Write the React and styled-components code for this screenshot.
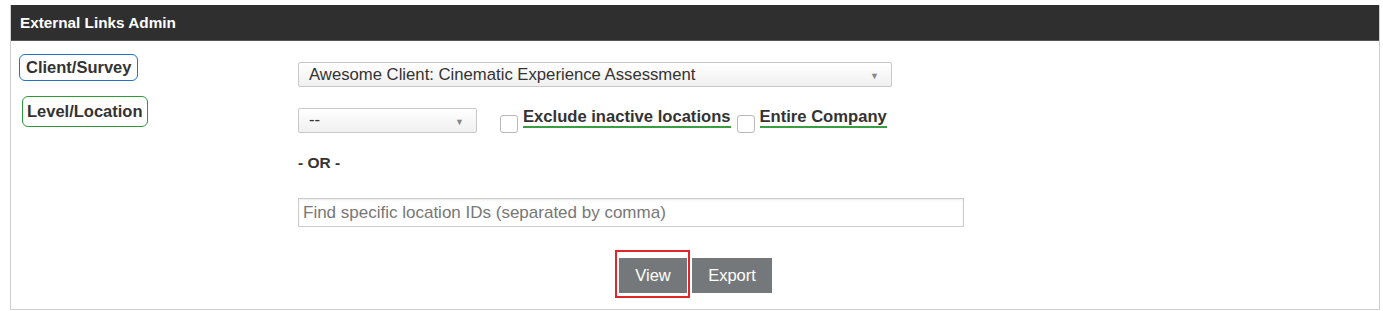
import styled, { createGlobalStyle } from 'styled-components';

const GlobalStyle = createGlobalStyle`
  body {
    margin: 0;
    background: #fff;
    font-family: "Liberation Sans", Arial, sans-serif;
    color: #333;
  }
`;

function App() {
  return (
    <>
      <GlobalStyle />
      <Panel>
        <Header>External Links Admin</Header>
        <Body>
          <Row>
            <LabelCell>
              <FieldLabel $color="#1f72c8">Client/Survey</FieldLabel>
            </LabelCell>
            <FieldCell $top={8}>
              <Select $width={594}>
                <span>Awesome Client: Cinematic Experience Assessment</span>
                <Arrow>▼</Arrow>
              </Select>
            </FieldCell>
          </Row>
          <Row>
            <LabelCell>
              <FieldLabel $color="#2c9a3c" $shift={3} $tall>
                Level/Location
              </FieldLabel>
            </LabelCell>
            <FieldCell $top={11}>
              <Select $width={179}>
                <span>--</span>
                <Arrow>▼</Arrow>
              </Select>
              <Check>
                <Box />
                <CheckText>Exclude inactive locations</CheckText>
              </Check>
              <Check>
                <Box />
                <CheckText>Entire Company</CheckText>
              </Check>
            </FieldCell>
          </Row>
          <Row>
            <LabelCell />
            <FieldCell $top={21}>
              <OrText>- OR -</OrText>
            </FieldCell>
          </Row>
          <Row>
            <LabelCell />
            <FieldCell $top={26}>
              <TextInput placeholder="Find specific location IDs (separated by comma)" />
            </FieldCell>
          </Row>
          <Actions>
            <Highlight>
              <Button $width={68}>View</Button>
            </Highlight>
            <Button $width={80}>Export</Button>
          </Actions>
        </Body>
      </Panel>
    </>
  );
}

export default App;

// STYLES
const Panel = styled.div`
  margin: 5px 0 0 10px;
  width: 1370px;
  border: 1px solid #cfcfcf;
  border-top: none;
  box-sizing: border-box;
`;

const Header = styled.div`
  height: 36px;
  background: #2f2f2f;
  border-bottom: 1px solid #555;
  box-sizing: border-box;
  color: #fff;
  font-weight: bold;
  font-size: 15.3px;
  line-height: 36px;
  padding-left: 9px;
`;

const Body = styled.div`
  display: flex;
  flex-direction: column;
  padding: 13px 0 11px 8px;
`;

const Row = styled.div`
  display: grid;
  grid-template-columns: 279px 1fr;
  align-items: start;
`;

const LabelCell = styled.div`
  display: flex;
`;

const FieldCell = styled.div`
  display: flex;
  align-items: center;
  margin-top: ${(p) => p.$top}px;
`;

const FieldLabel = styled.div`
  margin-left: ${(p) => p.$shift || 0}px;
  border: 1.5px solid ${(p) => p.$color};
  border-radius: 6px;
  padding: 0 ${(p) => (p.$tall ? 4 : 6)}px;
  height: ${(p) => (p.$tall ? 31 : 27)}px;
  line-height: ${(p) => (p.$tall ? 28 : 24)}px;
  box-sizing: border-box;
  font-weight: bold;
  font-size: 16.5px;
  color: #333;
  margin-bottom: ${(p) => (p.$tall ? 0 : 15)}px;
`;

const Select = styled.div`
  width: ${(p) => p.$width}px;
  height: 25px;
  box-sizing: border-box;
  border: 1px solid #c8c8c8;
  border-radius: 2px;
  background: linear-gradient(#ffffff, #f0f0f0);
  display: flex;
  align-items: center;
  justify-content: space-between;
  padding: 0 12px 0 10px;
  font-size: 16.7px;
  color: #333;
`;

const Arrow = styled.span`
  font-size: 9px;
  color: #888;
  margin-top: 3px;
`;

const Check = styled.label`
  display: flex;
  align-items: flex-start;
  margin-left: 23px;

  & + & {
    margin-left: 6px;
  }
`;

const Box = styled.span`
  width: 18px;
  height: 18px;
  box-sizing: border-box;
  border: 1px solid #b9b9b9;
  border-radius: 3px;
  background: #fff;
  margin-top: 8px;
  margin-right: 5px;
`;

const CheckText = styled.span`
  font-weight: bold;
  font-size: 16.6px;
  color: #333;
  line-height: 19px;
  border-bottom: 2px solid #3a9d43;
`;

const OrText = styled.div`
  font-weight: bold;
  font-size: 15.5px;
  color: #333;
`;

const TextInput = styled.input`
  width: 666px;
  height: 29px;
  box-sizing: border-box;
  border: 1px solid #cccccc;
  box-shadow: inset 0 1px 2px rgba(0, 0, 0, 0.08);
  padding: 0 4px;
  font-family: "Liberation Sans", Arial, sans-serif;
  font-size: 17px;
  color: #333;
  outline: none;

  &::placeholder {
    color: #777;
  }
`;

const Actions = styled.div`
  display: flex;
  justify-content: center;
  align-items: flex-start;
  gap: 2px;
  margin-top: 23px;
  padding-right: 11px;
`;

const Highlight = styled.div`
  border: 2px solid #e0262b;
  padding: 6px 1px 3px 2px;
`;

const Button = styled.button`
  width: ${(p) => p.$width}px;
  height: 35px;
  margin-top: 8px;
  border: none;
  background: #75787b;
  color: #fff;
  font-family: "Liberation Sans", Arial, sans-serif;
  font-size: 16.5px;
  cursor: pointer;

  ${Highlight} > & {
    margin-top: 0;
  }
`;
